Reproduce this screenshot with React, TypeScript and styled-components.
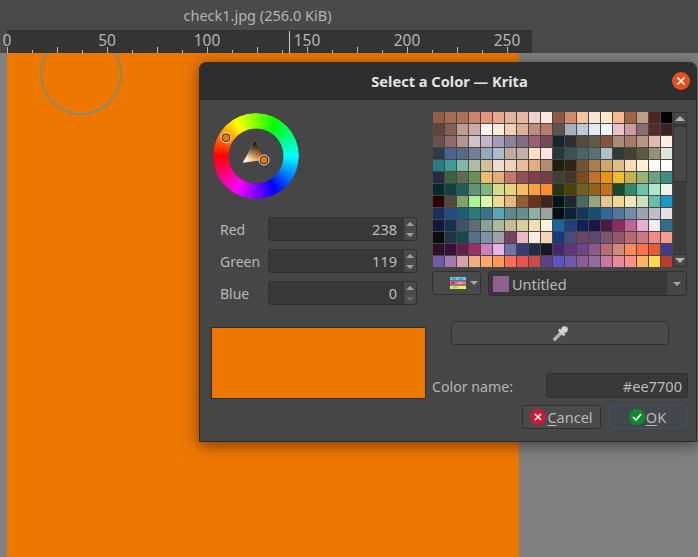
import { createGlobalStyle, styled } from "styled-components";

const GlobalStyle = createGlobalStyle`
  html, body { margin: 0; padding: 0; background: #4a4a4a; }
  * { box-sizing: border-box; }
`;

const FONT = `"Noto Sans", "Open Sans", "DejaVu Sans", sans-serif`;

const PALETTE = [
  "8f5f48 a66b50 ab7354 cc8367 e39679 e9a78e e8b19d e9b7a1 f0d3c7 fde6dd 8f5a43 cf8c6b f6c39c fbe4d4 fee8c8 f6bb8b a06540 be9c85 4f231e 000000",
  "60453c 835f55 be9b94 cfaaa8 fdf3f0 fcecd9 f0d1b9 dcb094 bb8f7c b87a6b 5d5152 a7adba bcc9dc e5e9f2 f5f8ff edc2c5 cc9d9e 8a6b74 552a2a 3c2022",
  "655054 96696a b2958f d1c4c5 c3b6cb a899bd 8f7f9f 836b88 9b5d71 764a55 17252b 2b2f31 554a3c 625843 83563c a78d75 a67c66 b99580 e1bbae fdf0e0",
  "2d3a45 4a648f 56698a 737e99 92a9c1 adbcc8 c3ab9c c1b1aa ffe3c7 ffe6dd 293639 3b5254 4a6664 557174 adc1c6 2f3a34 44422e 5d583f 929472 dfe4dc",
  "267d80 3f9a96 82b6a6 aebea3 cfc09b f0dccc eed2b8 e9bc9b e3ab80 b08e6f 1f1c10 2e2414 745430 a67f4a d0a56e dcbe8a fddbb3 fff1d2 fbfef4 ffffff",
  "272a3f 3a6344 626a4f 6a9159 eabd72 e3ae7a c47a6b 8e5050 7f3f48 753c41 3c4130 433622 7d4a1c c56f2a e8950c f2bd2b c5b34e 9ab276 6aa381 3a8f7f",
  "052a2c 13403f 1f5e57 5e9579 80b485 d2dd8e e9d47c f5bf62 f9a13f ff8c2b 283310 4a4205 6f6220 90651a c4721a 174a2c 2e8a6a 68c6a8 ade6cf f0f3ea",
  "2c0006 4f4a3c 7fa46b a9f593 d6fbae ecdb93 e4ba82 8f5f33 6b3418 44241a 031418 19292e 486a60 95a584 e7c593 f2d793 f0e6b9 cde0b8 66bfa9 1a98cc",
  "1b2f5e 214e85 1e5e75 2a7a7c 397386 59a5b3 5f8a88 658e8c 8fafa0 9ea39b 000e18 0b2238 12395a 154e75 2f689a 52779e 6d8ea8 9da1b3 c0bcc6 e8dfe0",
  "141739 153250 3e5469 5b6e75 89a296 aaba9d c2bb93 d6ce9a efdfb5 f8f1dc 1a659c 1f4178 0e2258 18164a 491a42 8d2a60 c26498 e7aed1 f0ecf5 336e8b",
  "0b0c0c 20324a 154a4f 527288 7e90a8 a3a0ad 754262 ecb9c1 f7ece2 f7d4b4 173882 464c7e 6c4468 604570 7b5470 98546a b96a70 c87a84 f08a82 f59e8e",
  "2e0f24 3c0e3e 651f4c 9e2f66 cd7ebc eab2e8 7273a6 393b78 262a42 16182a 442a6c 5f3580 6e4488 8d5a88 b96a74 d48a78 fd8b58 fc7146 e65c34 3f3d88",
  "6d5ba6 a47bb1 d2a3a8 efae82 fda76c ff9957 ff6e52 ef5050 cc4a4a 5d4187 5b55bd 7258a8 8c5a96 956aa0 c678a0 e88a9c fc9088 ffb260 ffd950 b83f2a",
].flatMap((row) => row.split(" "));

const RULER_TICKS = Array.from({ length: 21 }, (_, i) => i * 25);
const RULER_LABELS = [0, 50, 100, 150, 200, 250];

const Page = styled.div`
  position: relative;
  width: 698px;
  height: 557px;
  overflow: hidden;
  display: flex;
  flex-direction: column;
  background: #4a4a4a;
  font-family: ${FONT};
`;

const TitleBar = styled.div`
  height: 30px;
  width: 515px;
  display: flex;
  align-items: center;
  justify-content: center;
  color: #b4b4b4;
  font-size: 14.5px;
`;

const RulerRow = styled.div`
  height: 23px;
  padding-left: 7px;
  flex: none;
`;

const Ruler = styled.div`
  position: relative;
  width: 525px;
  height: 23px;
  background: #343434;
  color: #b4b4b4;
  font-size: 15.5px;
  border-top: 1px solid #303030;
`;

const RulerLabel = styled.span`
  position: absolute;
  top: 1px;
  line-height: 16px;
  transform: translateX(-50%);
`;

const RulerTick = styled.i<{ $tall: boolean }>`
  position: absolute;
  bottom: 0;
  width: 1px;
  height: ${(p) => (p.$tall ? 6 : 3)}px;
  background: #b8b8b8;
`;

const RulerCursor = styled.i`
  position: absolute;
  left: 282px;
  top: 0;
  bottom: 0;
  width: 1px;
  background: #cfcfcf;
`;

const Workspace = styled.div`
  flex: 1;
  display: flex;
  position: relative;
`;

const Gutter = styled.div<{ $grow?: boolean }>`
  width: 7px;
  flex: ${(p) => (p.$grow ? 1 : "none")};
  background: #808080;
`;

const CanvasImage = styled.div`
  position: relative;
  width: 512px;
  overflow: hidden;
  background: #ee7700;
`;

const BrushOutline = styled.svg`
  position: absolute;
  left: 32px;
  top: -22px;
  width: 84px;
  height: 84px;
`;

const Dialog = styled.div`
  position: absolute;
  left: 199px;
  top: 62px;
  width: 498px;
  height: 380px;
  display: flex;
  flex-direction: column;
  background: #464646;
  border: 1px solid #2b2b2b;
  border-radius: 7px 7px 0 0;
  box-shadow: 0 3px 16px rgba(0, 0, 0, 0.5);
`;

const DialogHeader = styled.div`
  position: relative;
  height: 37px;
  flex: none;
  display: flex;
  align-items: center;
  justify-content: center;
  padding-left: 3px;
  background: #2e2e2e;
  border-radius: 6px 6px 0 0;
  border-bottom: 1px solid #262626;
  color: #e4e4e4;
  font-size: 14.6px;
  font-weight: 700;
`;

const CloseButton = styled.div`
  position: absolute;
  right: 6px;
  top: 9px;
  width: 18px;
  height: 18px;
  border-radius: 50%;
  background: #e5501e;
  display: flex;
  align-items: center;
  justify-content: center;
`;

const DialogBody = styled.div`
  flex: 1;
  display: grid;
  grid-template-columns: 215px 256px;
  column-gap: 6px;
  padding: 10px 0 0 11px;
`;

const LeftColumn = styled.div`
  display: flex;
  flex-direction: column;
`;

const RightColumn = styled.div`
  display: flex;
  flex-direction: column;
`;

const WheelBlock = styled.div`
  position: relative;
  width: 86px;
  height: 86px;
  margin: 3px 0 18px 2px;
`;

const HueRing = styled.div`
  width: 86px;
  height: 86px;
  border-radius: 50%;
  background: conic-gradient(from 270deg, #f00, #ff0, #0f0, #0ff, #00f, #f0f, #f00);
  mask: radial-gradient(circle, transparent 27px, #000 27.8px);
`;

const WheelOverlay = styled.svg`
  position: absolute;
  left: 0;
  top: 0;
  width: 86px;
  height: 86px;
`;

const ChannelList = styled.div`
  display: flex;
  flex-direction: column;
  gap: 8px;
`;

const ChannelRow = styled.div`
  height: 24px;
  display: flex;
  align-items: center;
  padding-left: 9px;
`;

const ChannelLabel = styled.span`
  width: 48px;
  color: #b8b8b8;
  font-size: 14px;
`;

const SpinBox = styled.div`
  width: 149px;
  height: 24px;
  display: flex;
  background: #383838;
  border: 1px solid #303030;
  border-radius: 3px;
`;

const SpinValue = styled.span`
  flex: 1;
  text-align: right;
  padding-right: 6px;
  line-height: 22px;
  color: #bcbcbc;
  font-size: 14.5px;
`;

const SpinButtons = styled.div`
  width: 13px;
  display: flex;
  flex-direction: column;
  background: #4a4a4a;
  border-left: 1px solid #333;
  border-radius: 0 2px 2px 0;
`;

const SpinArrow = styled.div<{ $down?: boolean; $dim?: boolean }>`
  flex: 1;
  display: flex;
  align-items: center;
  justify-content: center;
  &::before {
    content: "";
    border-left: 4px solid transparent;
    border-right: 4px solid transparent;
    ${(p) => (p.$down ? "border-top" : "border-bottom")}: 4px solid ${(p) =>
      p.$dim ? "#6c6c6c" : "#a0a0a0"};
  }
`;

const Preview = styled.div`
  width: 215px;
  height: 72px;
  margin-top: 22px;
  background: #ee7700;
  border: 1px solid #2e2e2e;
`;

const PaletteFrame = styled.div`
  height: 158px;
  display: flex;
  padding: 2px 0 0 1px;
  gap: 1px;
`;

const PaletteGrid = styled.div`
  display: grid;
  grid-template-columns: repeat(20, 11px);
  grid-auto-rows: 11px;
  gap: 1px;
`;

const PaletteCell = styled.div<{ $color: string }>`
  background: #${(p) => p.$color};
`;

const ScrollBar = styled.div`
  width: 14px;
  height: 155px;
  display: flex;
  flex-direction: column;
  background: #3c3c3c;
`;

const ScrollButton = styled.div<{ $down?: boolean }>`
  height: 13px;
  flex: none;
  display: flex;
  align-items: center;
  justify-content: center;
  background: #4a4a4a;
  border: 1px solid #333;
  &::before {
    content: "";
    border-left: 5px solid transparent;
    border-right: 5px solid transparent;
    ${(p) => (p.$down ? "border-top" : "border-bottom")}: 5px solid #b4b4b4;
  }
`;

const ScrollThumb = styled.div`
  height: 56px;
  margin: 1px 0 auto;
  background: #484848;
  border: 1px solid #333;
`;

const PaletteControls = styled.div`
  display: flex;
  gap: 7px;
  margin-top: 3px;
  padding-right: 1px;
`;

const PaletteMenuButton = styled.div`
  width: 49px;
  height: 24px;
  display: flex;
  align-items: center;
  gap: 4px;
  padding-left: 17px;
  background: #4a4a4a;
  border: 1px solid #303030;
  border-radius: 3px;
`;

const MenuCaret = styled.i`
  border-left: 4px solid transparent;
  border-right: 4px solid transparent;
  border-top: 4px solid #a8a8a8;
`;

const PaletteCombo = styled.div`
  flex: 1;
  height: 25px;
  display: flex;
  align-items: center;
  padding-left: 4px;
  background: #383838;
  border: 1px solid #303030;
  border-radius: 3px;
`;

const ComboSwatch = styled.div`
  width: 16px;
  height: 16px;
  background: #8f5f8f;
`;

const ComboText = styled.span`
  flex: 1;
  padding-left: 3px;
  color: #b8b8b8;
  font-size: 14.5px;
`;

const ComboArrow = styled.div`
  width: 19px;
  align-self: stretch;
  display: flex;
  align-items: center;
  justify-content: center;
  background: #464646;
  border-radius: 0 2px 2px 0;
`;

const PickerButton = styled.div`
  width: 218px;
  height: 24px;
  margin: 25px 0 0 19px;
  display: flex;
  align-items: center;
  justify-content: center;
  background: #4a4a4a;
  border: 1px solid #303030;
  border-radius: 3px;
`;

const NameRow = styled.div`
  display: flex;
  align-items: center;
  justify-content: space-between;
  margin-top: 28px;
`;

const NameLabel = styled.span`
  padding-top: 2px;
  color: #b4b4b4;
  font-size: 14.2px;
`;

const NameInput = styled.div`
  width: 142px;
  height: 25px;
  padding-right: 5px;
  text-align: right;
  line-height: 24px;
  background: #383838;
  border: 1px solid #303030;
  border-radius: 3px;
  color: #bcbcbc;
  font-size: 14.6px;
`;

const ActionRow = styled.div`
  display: flex;
  justify-content: flex-end;
  gap: 7px;
  margin: 7px 1px 0 0;
`;

const ActionButton = styled.div<{ $focused?: boolean }>`
  width: 79px;
  height: 24px;
  display: flex;
  align-items: center;
  justify-content: center;
  gap: 1px;
  background: ${(p) => (p.$focused ? "#43484c" : "#4a4a4a")};
  border: 1px solid ${(p) => (p.$focused ? "#3d5268" : "#303030")};
  border-radius: 3px;
  color: #b8b8b8;
  font-size: 14.5px;
`;

const StatusDot = styled.span<{ $color: string }>`
  width: 16px;
  height: 16px;
  border-radius: 50%;
  background: ${(p) => p.$color};
  display: flex;
  align-items: center;
  justify-content: center;
`;

const Mnemonic = styled.span`
  text-decoration: underline;
  text-underline-offset: 2px;
`;

function Channel({ label, value, dimDown }: { label: string; value: number; dimDown?: boolean }) {
  return (
    <ChannelRow>
      <ChannelLabel>{label}</ChannelLabel>
      <SpinBox>
        <SpinValue>{value}</SpinValue>
        <SpinButtons>
          <SpinArrow />
          <SpinArrow $down $dim={dimDown} />
        </SpinButtons>
      </SpinBox>
    </ChannelRow>
  );
}

function Wheel() {
  return (
    <WheelBlock>
      <HueRing />
      <WheelOverlay viewBox="0 0 86 86">
        <defs>
          <linearGradient id="tone" gradientUnits="userSpaceOnUse" x1="31" y1="49.7" x2="51" y2="47">
            <stop offset="0" stopColor="#fff" />
            <stop offset="1" stopColor="#ee7700" />
          </linearGradient>
          <linearGradient id="shade" gradientUnits="userSpaceOnUse" x1="42" y1="28" x2="40" y2="46">
            <stop offset="0" stopColor="#000" />
            <stop offset="1" stopColor="#000" stopOpacity="0" />
          </linearGradient>
        </defs>
        <polygon points="42,27.7 29.7,49.7 51,47" fill="url(#tone)" />
        <polygon points="42,27.7 29.7,49.7 51,47" fill="url(#shade)" />
        <circle cx="13" cy="24.7" r="4" fill="#ee7700" stroke="#2a2a2a" strokeWidth="1" />
        <circle cx="13" cy="24.7" r="5" fill="none" stroke="#e8e0d8" strokeWidth="1" />
        <circle cx="51" cy="47" r="4" fill="#ee7700" stroke="#2a2a2a" strokeWidth="1" />
        <circle cx="51" cy="47" r="5" fill="none" stroke="#e8e0d8" strokeWidth="1" />
      </WheelOverlay>
    </WheelBlock>
  );
}

export default function App() {
  return (
    <Page>
      <GlobalStyle />
      <TitleBar>check1.jpg (256.0 KiB)</TitleBar>
      <RulerRow>
        <Ruler>
          {RULER_LABELS.map((n) => (
            <RulerLabel key={n} style={{ left: n * 2 }}>
              {n}
            </RulerLabel>
          ))}
          {RULER_TICKS.map((x, i) => (
            <RulerTick key={x} $tall={i % 2 === 0} style={{ left: x }} />
          ))}
          <RulerCursor />
        </Ruler>
      </RulerRow>
      <Workspace>
        <Gutter />
        <CanvasImage>
          <BrushOutline viewBox="0 0 84 84">
            <circle cx="42" cy="43" r="40" fill="none" stroke="#5a92a4" strokeWidth="1.3" />
          </BrushOutline>
        </CanvasImage>
        <Gutter $grow />
      </Workspace>
      <Dialog>
        <DialogHeader>
          Select a Color — Krita
          <CloseButton>
            <svg width="10" height="10" viewBox="0 0 10 10">
              <path d="M1.5 1.5l7 7M8.5 1.5l-7 7" stroke="#fff" strokeWidth="1.6" />
            </svg>
          </CloseButton>
        </DialogHeader>
        <DialogBody>
          <LeftColumn>
            <Wheel />
            <ChannelList>
              <Channel label="Red" value={238} />
              <Channel label="Green" value={119} />
              <Channel label="Blue" value={0} dimDown />
            </ChannelList>
            <Preview />
          </LeftColumn>
          <RightColumn>
            <PaletteFrame>
              <PaletteGrid>
                {PALETTE.map((c, i) => (
                  <PaletteCell key={i} $color={c} />
                ))}
              </PaletteGrid>
              <ScrollBar>
                <ScrollButton />
                <ScrollThumb />
                <ScrollButton $down />
              </ScrollBar>
            </PaletteFrame>
            <PaletteControls>
              <PaletteMenuButton>
                <svg width="16" height="12" viewBox="0 0 16 12">
                  <rect y="0" width="16" height="3.4" fill="#5cd0d4" />
                  <rect x="2" y="0.8" width="4" height="1.8" fill="#3a9cb8" />
                  <rect x="9" y="0.8" width="4" height="1.8" fill="#3a9cb8" />
                  <rect y="4.3" width="16" height="3.4" fill="#ec6ab0" />
                  <rect x="1" y="5.1" width="4" height="1.8" fill="#d8304c" />
                  <rect x="8" y="5.1" width="4" height="1.8" fill="#f0a0d8" />
                  <rect y="8.6" width="16" height="3.4" fill="#e8ec58" />
                  <rect x="3" y="9.4" width="5" height="1.8" fill="#a8c858" />
                </svg>
                <MenuCaret />
              </PaletteMenuButton>
              <PaletteCombo>
                <ComboSwatch />
                <ComboText>Untitled</ComboText>
                <ComboArrow>
                  <MenuCaret />
                </ComboArrow>
              </PaletteCombo>
            </PaletteControls>
            <PickerButton>
              <svg width="17" height="17" viewBox="0 0 16 16">
                <path d="M1.6 14.4L8.4 7.6" stroke="#b4b4b4" strokeWidth="3.2" />
                <path d="M6.4 4.2L11.8 9.6" stroke="#d4d4d4" strokeWidth="2.6" />
                <circle cx="11.8" cy="4.2" r="3.1" fill="#d4d4d4" />
              </svg>
            </PickerButton>
            <NameRow>
              <NameLabel>Color name:</NameLabel>
              <NameInput>#ee7700</NameInput>
            </NameRow>
            <ActionRow>
              <ActionButton>
                <StatusDot $color="#cc1a35">
                  <svg width="8" height="8" viewBox="0 0 8 8">
                    <path d="M1 1l6 6M7 1L1 7" stroke="#fff" strokeWidth="1.6" />
                  </svg>
                </StatusDot>
                <span>
                  <Mnemonic>C</Mnemonic>ancel
                </span>
              </ActionButton>
              <ActionButton $focused>
                <StatusDot $color="#108a2e">
                  <svg width="10" height="8" viewBox="0 0 10 8">
                    <path d="M1 4l3 3 5-6" fill="none" stroke="#fff" strokeWidth="1.6" />
                  </svg>
                </StatusDot>
                <span>
                  <Mnemonic>O</Mnemonic>K
                </span>
              </ActionButton>
            </ActionRow>
          </RightColumn>
        </DialogBody>
      </Dialog>
    </Page>
  );
}
